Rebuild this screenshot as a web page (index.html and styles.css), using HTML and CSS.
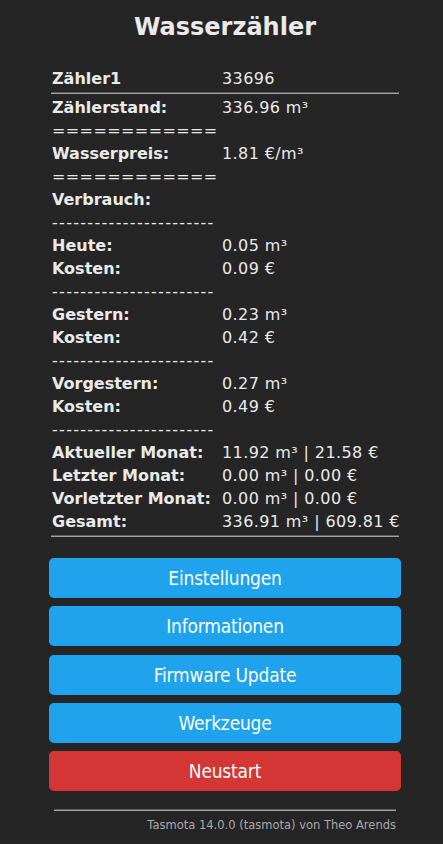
FILE: index.html
```html
<!DOCTYPE html>
<html lang="de">
<head>
<meta charset="utf-8">
<title>Wasserzähler</title>
<link rel="stylesheet" href="styles.css">
</head>
<body>
<div class="page">
  <h2 class="title">Wasserzähler</h2>
  <div class="sensors">
    <div class="row"><span class="lbl">Zähler1</span><span class="val">33696</span></div>
    <div class="rule"></div>
    <div class="row"><span class="lbl">Zählerstand:</span><span class="val">336.96 m³</span></div>
    <div class="row"><span class="sep">============</span></div>
    <div class="row"><span class="lbl">Wasserpreis:</span><span class="val">1.81 €/m³</span></div>
    <div class="row"><span class="sep">============</span></div>
    <div class="row"><span class="lbl">Verbrauch:</span><span class="val"></span></div>
    <div class="row"><span class="sep dash">-----------------------</span></div>
    <div class="row"><span class="lbl">Heute:</span><span class="val">0.05 m³</span></div>
    <div class="row"><span class="lbl">Kosten:</span><span class="val">0.09 €</span></div>
    <div class="row"><span class="sep dash">-----------------------</span></div>
    <div class="row"><span class="lbl">Gestern:</span><span class="val">0.23 m³</span></div>
    <div class="row"><span class="lbl">Kosten:</span><span class="val">0.42 €</span></div>
    <div class="row"><span class="sep dash">-----------------------</span></div>
    <div class="row"><span class="lbl">Vorgestern:</span><span class="val">0.27 m³</span></div>
    <div class="row"><span class="lbl">Kosten:</span><span class="val">0.49 €</span></div>
    <div class="row"><span class="sep dash">-----------------------</span></div>
    <div class="row"><span class="lbl">Aktueller Monat:</span><span class="val">11.92 m³ | 21.58 €</span></div>
    <div class="row"><span class="lbl">Letzter Monat:</span><span class="val">0.00 m³ | 0.00 €</span></div>
    <div class="row"><span class="lbl">Vorletzter Monat:</span><span class="val">0.00 m³ | 0.00 €</span></div>
    <div class="row"><span class="lbl">Gesamt:</span><span class="val">336.91 m³ | 609.81 €</span></div>
    <div class="rule"></div>
  </div>
  <div class="buttons">
    <button class="btn">Einstellungen</button>
    <button class="btn">Informationen</button>
    <button class="btn">Firmware Update</button>
    <button class="btn">Werkzeuge</button>
    <button class="btn btn-red">Neustart</button>
  </div>
  <div class="footer">
    <div class="footer-rule"></div>
    <a class="footer-link" href="#">Tasmota 14.0.0 (tasmota) von Theo Arends</a>
  </div>
</div>
</body>
</html>
```
FILE: styles.css
```css
html, body {
  margin: 0;
  padding: 0;
  background: #252525;
}
body {
  font-family: "DejaVu Sans", Verdana, sans-serif;
  color: #eaeaea;
  font-size: 16px;
}
.page {
  width: 352px;
  margin-left: 49px;
}
.title {
  margin: 0;
  padding-top: 13px;
  line-height: 28px;
  font-size: 24px;
  font-weight: bold;
  text-align: center;
}
.sensors {
  margin-top: 25.5px;
  padding: 0 2px;
}
.row {
  display: grid;
  grid-template-columns: 171px 1fr;
  line-height: 23px;
  height: 23px;
  white-space: nowrap;
}
.lbl {
  padding-left: 1px;
  font-weight: bold;
}
.val {
  letter-spacing: 0.4px;
}
.sep {
  padding-left: 1px;
  grid-column: 1 / 3;
  letter-spacing: 0.4px;
}
.dash {
  letter-spacing: 1.3px;
}
.rule {
  height: 0;
  margin: 2.5px 0 1.5px;
  border-top: 1px solid #5e5e5e;
  border-bottom: 1px solid #a2a2a2;
}
.buttons {
  margin-top: 21px;
  display: flex;
  flex-direction: column;
  gap: 8.3px;
}
.btn {
  display: block;
  width: 100%;
  border: 0;
  padding: 0;
  border-radius: 4.8px;
  background: #1fa3ec;
  color: #faffff;
  font-family: "DejaVu Sans Condensed", "DejaVu Sans", sans-serif;
  font-size: 19px;
  letter-spacing: -0.2px;
  line-height: 40px;
  cursor: pointer;
}
.btn-red {
  background: #d43535;
}
.footer {
  margin-top: 18px;
  text-align: right;
  padding: 0 5px;
}
.footer-rule {
  height: 0;
  border-top: 1px solid #5e5e5e;
  border-bottom: 1px solid #a2a2a2;
}
.footer-link {
  display: block;
  margin-top: 8px;
  font-size: 11.5px;
  line-height: 13px;
  color: #aaa;
  text-decoration: none;
}
```
